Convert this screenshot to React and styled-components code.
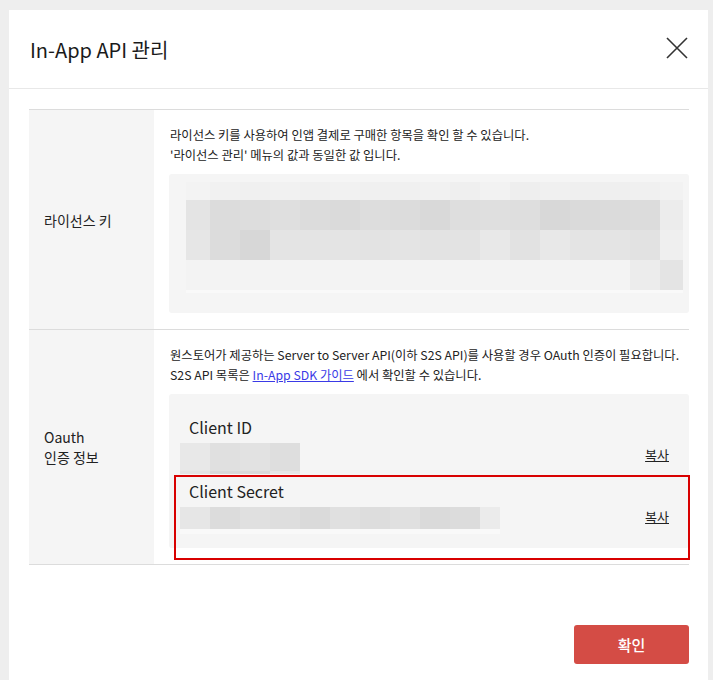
import styled, { createGlobalStyle } from "styled-components";

const GlobalStyle = createGlobalStyle`
  html, body {
    margin: 0;
    padding: 0;
    background: #eeeeee;
  }
  body {
    font-family: "Noto Sans CJK KR", "Noto Sans", sans-serif;
    color: #222;
  }
`;

const licenseRows = [
  {
    h: 18,
    c: ["#f3f3f3", "#f1f1f1", "#f0f0f0", "#f1f1f1", "#f0f0f0", "#f1f1f1", "#f0f0f0", "#f0f0f0", "#f1f1f1", "#efefef", "#f2f2f2", "#eeeeee", "#f0f0f0", "#efefef", "#efefef", "#f0f0f0", "#f2f2f2"],
  },
  {
    h: 30,
    c: ["#e4e4e4", "#dcdcdc", "#dddddd", "#dfdfdf", "#dcdcdc", "#dadada", "#dddddd", "#dcdcdc", "#d9d9d9", "#dedede", "#dfdfdf", "#dedede", "#d8d8d8", "#dadada", "#dbdbdb", "#dcdcdc", "#ececec"],
  },
  {
    h: 30,
    c: ["#e6e6e6", "#dcdcdc", "#d7d7d7", "#e4e4e4", "#e4e4e4", "#e4e4e4", "#e3e3e3", "#e4e4e4", "#e3e3e3", "#e3e3e3", "#e8e8e8", "#e2e2e2", "#e8e8e8", "#e4e4e4", "#e4e4e4", "#e2e2e2", "#efefef"],
  },
  {
    h: 30,
    c: ["#f3f3f3", "#f3f3f3", "#f3f3f3", "#f3f3f3", "#f3f3f3", "#f3f3f3", "#f3f3f3", "#f3f3f3", "#f3f3f3", "#f3f3f3", "#f3f3f3", "#f3f3f3", "#f3f3f3", "#f3f3f3", "#f3f3f3", "#ececec", "#e4e4e4"],
  },
  { h: 3, c: Array(17).fill("#f9f9f9") },
];
const licenseCols = [24, ...Array(15).fill(30), 23];

const idRows = [
  { h: 28, c: ["#e8e8e8", "#e0e0e0", "#e2e2e2", "#dedede"] },
  { h: 3, c: ["#e4e4e4", "#d9d9d9", "#dadada", "#e6e6e6"] },
];
const idCols = [30, 30, 30, 30];

const secretRows = [
  { h: 22, c: ["#e6e6e6", "#dcdcdc", "#e0e0e0", "#dedede", "#dadada", "#e0e0e0", "#dddddd", "#e0e0e0", "#dadada", "#dcdcdc", "#ebebeb"] },
  { h: 5, c: Array(11).fill("#f9f9f9") },
];
const secretCols = [...Array(10).fill(30), 20];

// redacted values are shown as a pixel mosaic
function Mosaic({ cols, rows, offset = 0 }) {
  return (
    <MosaicGrid
      $offset={offset}
      style={{
        gridTemplateColumns: cols.map((w) => `${w}px`).join(" "),
        gridTemplateRows: rows.map((r) => `${r.h}px`).join(" "),
      }}
    >
      {rows.map((r, i) =>
        r.c.map((color, j) => (
          <span key={`${i}-${j}`} style={{ background: color }} />
        ))
      )}
    </MosaicGrid>
  );
}

function CloseIcon() {
  return (
    <svg width="22" height="22" viewBox="0 0 22 22">
      <path d="M1 1 L21 21 M21 1 L1 21" stroke="#333" strokeWidth="1.6" fill="none" />
    </svg>
  );
}

export default function App() {
  return (
    <>
      <GlobalStyle />
      <Modal>
        <Header>
          <Title>In-App API 관리</Title>
          <CloseButton aria-label="닫기">
            <CloseIcon />
          </CloseButton>
        </Header>
        <Body>
          <Table>
            <Row>
              <Label>라이선스 키</Label>
              <Cell>
                <Desc>
                  라이선스 키를 사용하여 인앱 결제로 구매한 항목을 확인 할 수 있습니다.
                  <br />
                  '라이선스 관리' 메뉴의 값과 동일한 값 입니다.
                </Desc>
                <KeyBox>
                  <Mosaic cols={licenseCols} rows={licenseRows} />
                </KeyBox>
              </Cell>
            </Row>
            <Row>
              <Label>
                Oauth
                <br />
                인증 정보
              </Label>
              <Cell>
                <Desc>
                  원스토어가 제공하는 Server to Server API(이하 S2S API)를 사용할 경우 OAuth 인증이 필요합니다.
                  <br />
                  S2S API 목록은 <GuideLink href="#">In-App SDK 가이드</GuideLink> 에서 확인할 수 있습니다.
                </Desc>
                <CredBox>
                  <CredItem>
                    <CredMain>
                      <CredName>Client ID</CredName>
                      <Mosaic cols={idCols} rows={idRows} offset={-9} />
                    </CredMain>
                    <CopyLink href="#">복사</CopyLink>
                  </CredItem>
                  <CredItem>
                    <CredMain>
                      <CredName>Client Secret</CredName>
                      <Mosaic cols={secretCols} rows={secretRows} offset={-9} />
                    </CredMain>
                    <CopyLink href="#">복사</CopyLink>
                  </CredItem>
                  <Highlight />
                </CredBox>
              </Cell>
            </Row>
          </Table>
        </Body>
        <Footer>
          <ConfirmButton>확인</ConfirmButton>
        </Footer>
      </Modal>
    </>
  );
}

const Modal = styled.div`
  width: 699px;
  margin: 10px 0 0 9px;
  background: #fff;
  padding-bottom: 30px;
`;

const Header = styled.div`
  height: 78px;
  display: flex;
  align-items: center;
  justify-content: space-between;
  padding: 0 20px 0 21px;
  border-bottom: 1px solid #e8e8e8;
`;

const Title = styled.h2`
  margin: 0;
  font-size: 20px;
  font-weight: 400;
  color: #1a1a1a;
  padding-top: 1px;
`;

const CloseButton = styled.button`
  border: 0;
  background: none;
  padding: 0;
  display: flex;
  cursor: pointer;
  margin-top: -2px;
`;

const Body = styled.div`
  padding: 20px 19px 0 20px;
`;

const Table = styled.div`
  border-top: 1px solid #dcdcdc;
`;

const Row = styled.div`
  display: grid;
  grid-template-columns: 125px 1fr;
  border-bottom: 1px solid #dcdcdc;
`;

const Label = styled.div`
  background: #f5f5f5;
  display: flex;
  align-items: center;
  padding-left: 15px;
  font-size: 14px;
  line-height: 20px;
  color: #222;
`;

const Cell = styled.div`
  padding: 15px 0 ${(p) => (p.$tight ? 15 : 16)}px 15px;
`;

const Desc = styled.p`
  margin: 0 0 9px 1px;
  font-size: 12.3px;
  line-height: 20px;
  color: #222;
`;

const GuideLink = styled.a`
  color: #3a3ae6;
  text-decoration: underline;
`;

const KeyBox = styled.div`
  background: #f5f5f5;
  border-radius: 3px;
  padding: 8px 5px 20px 17px;
`;

const MosaicGrid = styled.div`
  display: grid;
  width: max-content;
  margin-left: ${(p) => p.$offset}px;
`;

const CredBox = styled.div`
  position: relative;
  background: #f5f5f5;
  border-radius: 3px;
  padding: 21px 20px 14px 20px;
`;

const CredItem = styled.div`
  display: flex;
  align-items: center;
  justify-content: space-between;
  & + & {
    margin-top: 5px;
  }
`;

const CredMain = styled.div`
  display: flex;
  flex-direction: column;
  gap: 4px;
`;

const CredName = styled.div`
  font-size: 16px;
  line-height: 24px;
  color: #222;
`;

const CopyLink = styled.a`
  font-size: 13px;
  color: #222;
  text-decoration: underline;
  margin-top: 20px;
`;

const Highlight = styled.div`
  position: absolute;
  left: 5px;
  top: 81px;
  width: 516px;
  height: 85px;
  box-sizing: border-box;
  border: 2px solid #d80000;
  pointer-events: none;
`;

const Footer = styled.div`
  display: flex;
  justify-content: flex-end;
  padding: 60px 19px 0 20px;
`;

const ConfirmButton = styled.button`
  width: 115px;
  height: 39px;
  border: 0;
  border-radius: 3px;
  background: #d44c45;
  color: #fff;
  font-family: "Noto Sans CJK KR", sans-serif;
  font-size: 15px;
  font-weight: 500;
  cursor: pointer;
`;
